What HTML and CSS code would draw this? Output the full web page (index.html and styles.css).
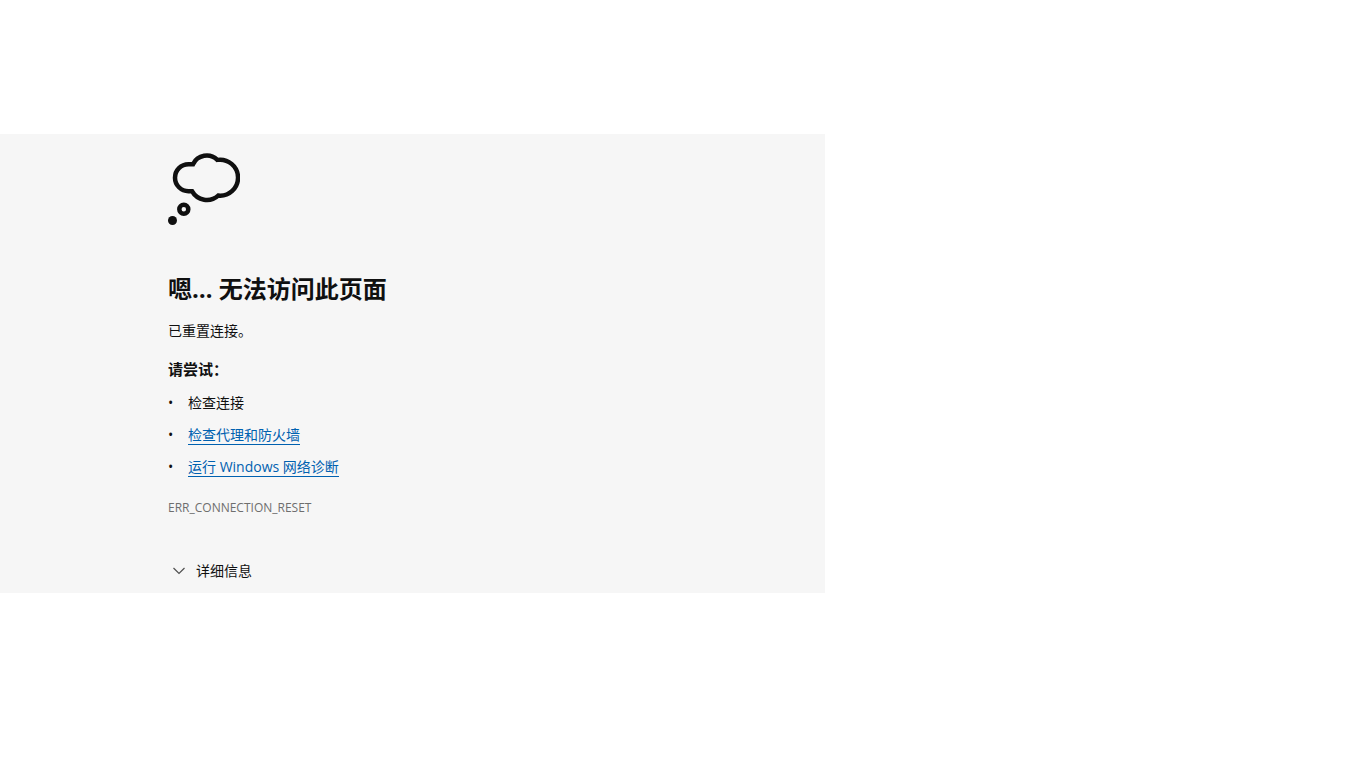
FILE: index.html
```html
<!DOCTYPE html>
<html lang="zh-CN">
<head>
    <meta charset="UTF-8">
    <meta name="viewport" content="width=device-width, initial-scale=1.0">
    <title>无法访问此页面</title>
    <link rel="stylesheet" href="styles.css">
</head>
<body>
    <main class="error-page">
        <!-- Thought bubble -->
        <svg class="error-icon" viewBox="0 0 72 72" aria-hidden="true">
            <g fill="none" stroke="#101010" stroke-width="4.5">
                <path d="M25 11.2A15.2 15.2 0 0 1 49.3 6.9A18 18 0 1 1 50.2 42.6A17 17 0 0 1 24 38.2H20.5A13.5 13.5 0 0 1 20.5 11.2Z"/>
                <circle cx="15.8" cy="56.3" r="4.5"/>
            </g>
            <circle cx="4.5" cy="67.5" r="4.5" fill="#101010"/>
        </svg>

        <h1>嗯… 无法访问此页面</h1>
        <p class="summary">已重置连接。</p>

        <h2>请尝试：</h2>
        <ul class="suggestions">
            <li>检查连接</li>
            <li><a href="#proxy">检查代理和防火墙</a></li>
            <li><a href="#diagnose">运行 Windows 网络诊断</a></li>
        </ul>

        <p class="error-code">ERR_CONNECTION_RESET</p>

        <button type="button" class="details-button">
            <svg class="chevron" viewBox="0 0 12 12" aria-hidden="true">
                <path d="M0.5 3L6 8.5L11.5 3" fill="none" stroke="#505050" stroke-width="1.2"/>
            </svg>
            详细信息
        </button>
    </main>
</body>
</html>
```
FILE: styles.css
```css
/* General Reset */
* {
    box-sizing: border-box;
}

body {
    margin: 0;
    font-family: "Open Sans", "Noto Sans CJK SC", sans-serif;
    font-size: 14px;
    line-height: 20px;
    color: #101010;
    background-color: #fff;
}

.error-page {
    max-width: 825px;
    margin-top: 134px;
    padding: 19px 20px 12px 168px;
    background-color: #f6f6f6;
}

.error-icon {
    display: block;
    width: 72px;
    height: 72px;
}

h1 {
    margin: 48px 0 16px;
    font-size: 24px;
    line-height: 32px;
    font-weight: 700;
}

.summary {
    margin: 0 0 18px;
}

h2 {
    margin: 0 0 14px;
    font-size: 15px;
    line-height: 20px;
    font-weight: 700;
}

/* Suggestions */
.suggestions {
    display: flex;
    flex-direction: column;
    gap: 12px;
    margin: 0;
    padding: 0;
    list-style: none;
}

.suggestions li {
    display: flex;
}

.suggestions li::before {
    content: "•";
    width: 20px;
}

.suggestions a {
    color: #0061b0;
    text-decoration: none;
    border-bottom: 1px solid #0061b0;
    line-height: 19px;
}

.error-code {
    margin: 21px 0 43px;
    font-size: 12px;
    font-weight: 500;
    color: #6e6e6e;
}

/* Details toggle */
.details-button {
    display: flex;
    align-items: center;
    gap: 11px;
    padding: 0 0 0 5px;
    border: none;
    background: none;
    color: #101010;
    font: inherit;
    cursor: pointer;
}

.chevron {
    width: 12px;
    height: 12px;
}
```
